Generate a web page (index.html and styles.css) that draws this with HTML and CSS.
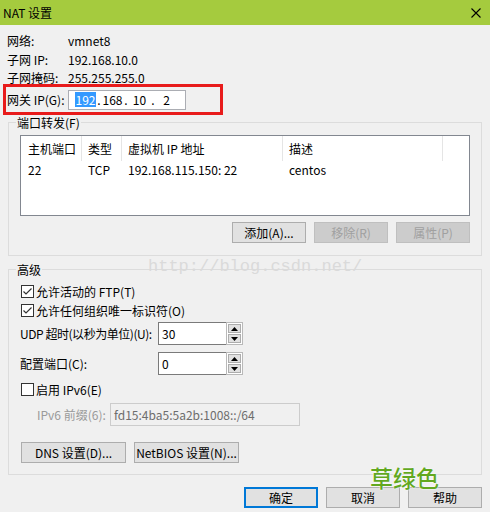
FILE: index.html
```html
<!DOCTYPE html>
<html lang="zh-CN">
<head>
    <meta charset="UTF-8">
    <meta name="viewport" content="width=device-width, initial-scale=1.0">
    <title>NAT 设置</title>
    <link rel="stylesheet" href="styles.css">
</head>
<body>
    <div class="titlebar">
        <span class="title">NAT 设置</span>
        <svg class="close" width="10" height="10" viewBox="0 0 10 10">
            <path d="M0.5 0.5 L9.5 9.5 M9.5 0.5 L0.5 9.5" stroke="#000" stroke-width="1.1" fill="none"/>
        </svg>
    </div>

    <div class="main">
        <div class="info">
            <div class="info-row"><span class="info-label">网络:</span><span>vmnet8</span></div>
            <div class="info-row"><span class="info-label">子网 IP:</span><span>192.168.10.0</span></div>
            <div class="info-row"><span class="info-label">子网掩码:</span><span>255.255.255.0</span></div>
        </div>

        <!-- highlighted gateway row -->
        <div class="gateway">
            <span class="gateway-label">网关 IP(G):</span>
            <div class="ip-box">
                <span class="ip-part selected">192</span><span class="ip-dot">.</span><span class="ip-part">168</span><span class="ip-dot">.</span><span class="ip-part">10</span><span class="ip-dot">.</span><span class="ip-part">2</span>
            </div>
        </div>

        <div class="group group-ports">
            <div class="group-title">端口转发(F)</div>
            <div class="port-list">
                <div class="list-head">
                    <div class="cell c1">主机端口</div>
                    <div class="cell c2">类型</div>
                    <div class="cell c3">虚拟机 IP 地址</div>
                    <div class="cell c4">描述</div>
                </div>
                <div class="list-row">
                    <div class="cell c1">22</div>
                    <div class="cell c2">TCP</div>
                    <div class="cell c3">192.168.115.150: 22</div>
                    <div class="cell c4">centos</div>
                </div>
            </div>
            <div class="btn-row">
                <button class="btn">添加(A)...</button>
                <button class="btn" disabled>移除(R)</button>
                <button class="btn" disabled>属性(P)</button>
            </div>
        </div>

        <div class="group group-adv">
            <div class="group-title">高级</div>
            <div class="check-row first">
                <span class="check"><svg width="11" height="11" viewBox="0 0 11 11"><path d="M1.5 5.5 L4 8 L9.5 2.5" stroke="#333" stroke-width="1.2" fill="none"/></svg></span>
                <span>允许活动的 FTP(T)</span>
            </div>
            <div class="check-row">
                <span class="check"><svg width="11" height="11" viewBox="0 0 11 11"><path d="M1.5 5.5 L4 8 L9.5 2.5" stroke="#333" stroke-width="1.2" fill="none"/></svg></span>
                <span>允许任何组织唯一标识符(O)</span>
            </div>

            <div class="field-row udp">
                <span class="field-label tight">UDP 超时(以秒为单位)(U):</span>
                <div class="spin">
                    <div class="spin-input">30</div>
                    <div class="spin-btns">
                        <span class="spin-btn"><svg width="7" height="4" viewBox="0 0 7 4"><path d="M3.5 0 L7 4 L0 4 Z" fill="#000"/></svg></span>
                        <span class="spin-btn"><svg width="7" height="4" viewBox="0 0 7 4"><path d="M0 0 L7 0 L3.5 4 Z" fill="#000"/></svg></span>
                    </div>
                </div>
            </div>
            <div class="field-row port">
                <span class="field-label">配置端口(C):</span>
                <div class="spin">
                    <div class="spin-input">0</div>
                    <div class="spin-btns">
                        <span class="spin-btn"><svg width="7" height="4" viewBox="0 0 7 4"><path d="M3.5 0 L7 4 L0 4 Z" fill="#000"/></svg></span>
                        <span class="spin-btn"><svg width="7" height="4" viewBox="0 0 7 4"><path d="M0 0 L7 0 L3.5 4 Z" fill="#000"/></svg></span>
                    </div>
                </div>
            </div>

            <div class="check-row ipv6">
                <span class="check"></span>
                <span>启用 IPv6(E)</span>
            </div>
            <div class="field-row prefix">
                <span class="prefix-label">IPv6 前缀(6):</span>
                <div class="prefix-input">fd15:4ba5:5a2b:1008::/64</div>
            </div>

            <div class="dns-row">
                <button class="btn wide">DNS 设置(D)...</button>
                <button class="btn wide">NetBIOS 设置(N)...</button>
            </div>
        </div>

        <div class="footer">
            <button class="btn default">确定</button>
            <button class="btn">取消</button>
            <button class="btn">帮助</button>
        </div>
    </div>

    <div class="wm-csdn">http://blog.csdn.net/</div>
    <div class="wm-green">草绿色</div>
</body>
</html>
```

FILE: styles.css
```css
body {
    margin: 0;
    width: 490px;
    height: 512px;
    overflow: hidden;
    position: relative;
    background: #f0f0f0;
    color: #000;
    font-family: "Noto Sans CJK SC", sans-serif;
    font-size: 12px;
    line-height: 16px;
    white-space: nowrap;
}
.titlebar {
    height: 25px;
    background: #a5cb3e;
    display: flex;
    align-items: center;
    justify-content: space-between;
    padding: 0 9px 0 3px;
}
.close {
    display: block;
}
.main {
    padding: 0 8px;
}

/* info rows */
.info {
    padding-top: 7px;
    margin-left: -1px;
}
.info-row {
    display: flex;
    align-items: center;
    height: 18.5px;
}
.info-label {
    flex: none;
    width: 61px;
}

/* red annotation box */
.gateway {
    position: relative; /* paint border over the row above */
    box-sizing: border-box;
    width: 220px;
    height: 31px;
    margin: -3.5px 0 0 -5px;
    padding-left: 1px;
    border: 3px solid #e81b1b;
    display: flex;
    align-items: center;
}
.gateway-label {
    flex: none;
    width: 61px;
}
.ip-box {
    flex: none;
    box-sizing: border-box;
    width: 118px;
    height: 20px;
    padding-left: 6px;
    border: 1px solid #abadb3;
    background: #fff;
    display: flex;
    align-items: center;
}
.ip-part {
    flex: none;
    width: 21px;
    text-align: center;
    line-height: 15px;
}
.ip-part.selected {
    background: #3399ff;
    color: #fff;
}
.ip-dot {
    flex: none;
    width: 6px;
    text-align: center;
}

/* group boxes */
.group {
    border: 1px solid #dcdcdc;
}
.group-title {
    width: max-content;
    margin: -8px 0 0 7px;
    padding: 0 1px;
    background: #f0f0f0;
    line-height: 16px;
}
.group-ports {
    margin-top: 7px;
    padding-bottom: 12px;
}
.group-adv {
    margin-top: 13px;
    padding-bottom: 11px;
}

/* port list */
.port-list {
    box-sizing: border-box;
    height: 81px;
    margin: 4px 11px 0;
    border: 1px solid #828790;
    background: #fff;
}
.list-head,
.list-row {
    display: flex;
}
.list-head {
    height: 25px;
}
.list-row {
    height: 18px;
}
.cell {
    box-sizing: border-box;
    flex: none;
    padding-left: 6px;
    display: flex;
    align-items: center;
}
.list-head .cell {
    border-right: 1px solid #e5e5e5;
}
.c1 { width: 61px; padding-left: 7px; }
.c2 { width: 40px; }
.c3 { width: 161px; }
.c4 { width: 160px; }

/* buttons */
.btn {
    box-sizing: border-box;
    width: 74px;
    height: 21px;
    padding: 0;
    border: 1px solid #adadad;
    background: #e1e1e1;
    color: #000;
    font: inherit;
    line-height: 16px;
}
.btn:disabled {
    background: #cccccc;
    border-color: #bfbfbf;
    color: #a0a0a0;
}
.btn.default {
    border: 2px solid #0078d7;
}
.btn.wide {
    width: 105px;
}
.btn-row {
    display: flex;
    justify-content: flex-end;
    gap: 8px;
    margin: 6px 11px 0;
}

/* advanced */
.check-row {
    display: flex;
    align-items: center;
    gap: 2px;
    height: 19px;
    margin-left: 12px;
}
.check-row.first {
    margin-top: 4px;
}
.check-row.ipv6 {
    margin-top: 5px;
}
.check {
    flex: none;
    box-sizing: border-box;
    width: 13px;
    height: 13px;
    border: 1px solid #333;
    background: #fff;
    display: flex;
}
.field-row {
    display: flex;
    align-items: center;
    height: 23px;
    margin-left: 11px;
}
.field-row.udp {
    margin-top: 2px;
}
.field-row.port {
    margin-top: 7px;
}
.field-label {
    flex: none;
    width: 138px;
}
.field-label.tight {
    letter-spacing: -0.45px;
}
.spin {
    flex: none;
    display: flex;
    height: 23px;
}
.spin-input {
    box-sizing: border-box;
    width: 68px;
    padding-left: 3px;
    border: 1px solid #7a7a7a;
    border-right: none;
    background: #fff;
    display: flex;
    align-items: center;
}
.spin-btns {
    box-sizing: border-box;
    width: 17px;
    padding: 1px;
    border: 1px solid #b9b9b9;
    background: #fff;
    display: flex;
    flex-direction: column;
    gap: 1px;
}
.spin-btn {
    flex: 1;
    border: 1px solid #adadad;
    background: #e1e1e1;
    display: flex;
    align-items: center;
    justify-content: center;
}
.field-row.prefix {
    margin: 4px 0 0 28px;
}
.prefix-label {
    flex: none;
    width: 73px;
    color: #9a9a9a;
}
.prefix-input {
    flex: none;
    box-sizing: border-box;
    width: 190px;
    height: 23px;
    padding-left: 3px;
    border: 1px solid #cccccc;
    color: #6d6d6d;
    display: flex;
    align-items: center;
}
.dns-row {
    display: flex;
    gap: 8px;
    margin: 16px 0 0 12px;
}

.footer {
    display: flex;
    justify-content: flex-end;
    gap: 8px;
    margin-top: 12px;
}

/* watermarks laid over the screenshot */
.wm-csdn {
    position: absolute;
    left: 148px;
    top: 258px;
    font-family: "Liberation Mono", monospace;
    font-size: 17px;
    line-height: 18px;
    color: #dadada;
}
.wm-green {
    position: absolute;
    left: 370px;
    top: 465px;
    font-size: 23px;
    line-height: 24px;
    font-weight: 500;
    color: #62a81f;
    text-shadow: 0 0 2px #fff, 0 0 1px #fff;
}
```
